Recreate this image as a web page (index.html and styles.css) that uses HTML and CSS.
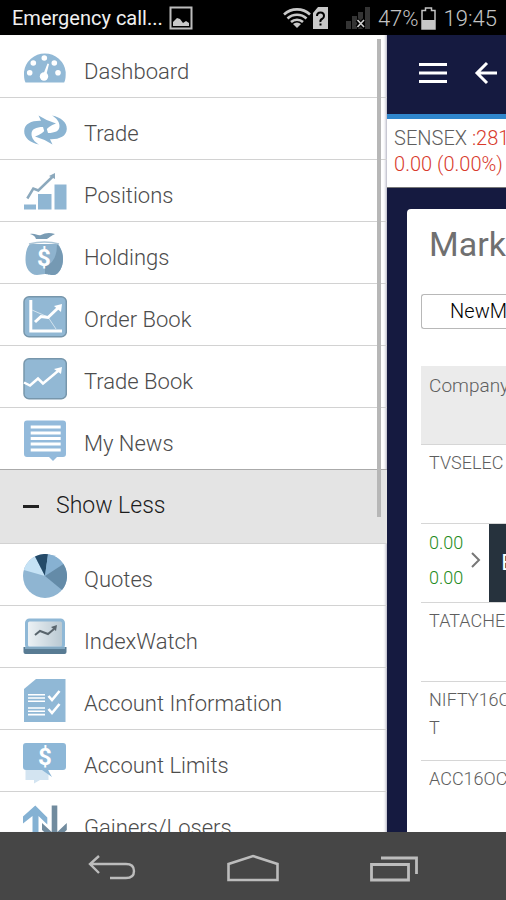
FILE: index.html
```html
<!DOCTYPE html>
<html lang="en">
<head>
<meta charset="utf-8">
<meta name="viewport" content="width=device-width, initial-scale=1">
<title>Market</title>
<link rel="stylesheet" href="styles.css">
</head>
<body>
<header class="status">
  <span class="status-text">Emergency call...</span>
  <svg class="status-picture" width="24" height="24" viewBox="0 0 24 24"><path d="M1.500 1.500h21v21h-21z" fill="none" stroke="#bdbdbd" stroke-width="2"/><path d="M4 20v-4l4-4 3 1 3 4 3-2 3 2v3z" fill="#c8c8c8"/></svg>
  <svg width="28" height="20" viewBox="0 0 28 20"><path d="M10 16a6 6 0 0 1 8 0l-4 4z" fill="#c8c8c8"/><path d="M1 6.500a19 19 0 0 1 26 0M4.500 10.500a14 14 0 0 1 19 0M8 14a9 9 0 0 1 12 0" fill="none" stroke="#c8c8c8" stroke-width="2.600"/></svg>
  <svg class="status-sim" width="15" height="22" viewBox="0 0 15 22"><path d="M5 0h10v22H0V6z" fill="#c8c8c8"/><path d="M4 9q0-3.500 3.500-3.500T11 9q0 2-2 3t-1.500 3" fill="none" stroke="#000" stroke-width="2"/><path d="M6.500 16.500h2v2h-2z"/></svg>
  <svg class="status-signal" width="24" height="22" viewBox="0 0 24 22"><path d="M0 14h5v8H0zM6 9h5v13H6zM12 5h5v17h-5zM19 0h5v22h-5z" fill="#343434"/><path d="m11 13 7 7m0-7-7 7" stroke="#000" stroke-width="4"/><path d="m11.500 13 6.500 7m0-7-6.500 7" stroke="#d0d0d0" stroke-width="1.600"/></svg>
  <span class="status-number">47%</span>
  <svg width="15" height="23" viewBox="0 0 15 23"><path d="M1 3.500h3.500V1h6v2.500H14V22H1z" fill="none" stroke="#c4c4c4" stroke-width="1.500"/><path d="M1 13h13v9H1z" fill="#c8c8c8"/></svg>
  <span class="status-number status-clock">19:45</span>
</header>

<main class="app">
  <nav class="drawer" aria-label="Main menu">
    <a class="item" href="#"><svg class="icon" viewBox="0 0 44 44"><path d="M2.500 36.500C1 34 1 30 1 26a21 21 0 0 1 41.700 0c0 4 0 8-1.500 10.500z" fill="#92b9d6"/><g fill="#fff"><circle cx="6.700" cy="26.700" r="2.800"/><circle cx="10.300" cy="17" r="2.800"/><circle cx="21.300" cy="12" r="2.800"/><circle cx="31.300" cy="17" r="2.800"/><circle cx="35" cy="26.700" r="2.800"/><circle cx="21" cy="30.500" r="4.200"/><path d="m20 29 4.500-11.500 1.500.5L23 30z"/></g></svg><span class="label">Dashboard</span></a>
    <a class="item" href="#"><svg class="icon" viewBox="0 0 44 44"><g id="swap"><path d="M16 36.500C7 34.500 1 30 1.200 23 1.500 15.500 9 12.500 18 12.800L15.500 7.500Q24 13 33 15.500 25 18 21.500 24l-1.500-5C13 19 8.500 21 8.500 26c0 4 3 8 7.500 10.500z" fill="#8bb4d2"/></g><use href="#swap" transform="rotate(180 22.500 22)"/></svg><span class="label">Trade</span></a>
    <a class="item" href="#"><svg class="icon" viewBox="0 0 44 44"><path d="M1 34.500h12v5H1zM15 24h13.500v15.500H15zM31.500 14.500h12v25h-12z" fill="#8fb6d3"/><path d="m4.300 28.500 6-10 5 2L30.300 6" fill="none" stroke="#8ca9bd" stroke-width="2.500"/><path d="m26 6 6-3v6z" fill="#8ca9bd"/></svg><span class="label">Positions</span></a>
    <a class="item" href="#"><svg class="icon" viewBox="0 0 44 44"><path d="M7 2c5-1 8 2 11 1 4-2 8-3 14-1-4 2-5 3-8 5H13c-1-3-3-4-6-5z" fill="#7a9cb4"/><path d="M7 12h28c3 4 5 9 5 15 0 8-4 16-10 16-4 0-5-1-8-1s-5 1-8 1C7 43 2.500 36 2.500 28S4 15 7 12z" fill="#8eb3ce"/><path d="M34 12c4 4 6 9 6 15 0 8-4 16-10 16-4 0-5-1-8-1V34q12-3 12-22z" fill="#7599b3"/><path d="M6 12q16-4 30 0" stroke="#acc5d6" stroke-width="1.500" fill="none"/><text class="dollar" x="21" y="34" text-anchor="middle">$</text></svg><span class="label">Holdings</span></a>
    <a class="item" href="#"><svg class="icon" viewBox="0 0 44 44"><rect x="1" y="2.800" width="42.300" height="40" rx="5" fill="#92b8d4" stroke="#7796ab" stroke-width="1.500"/><path d="M7.800 6v31H39" fill="none" stroke="#fff" stroke-width="3"/><path d="m9 16 16 7 8 12" fill="none" stroke="#d4e4ef" stroke-width="1"/><path d="m12 28 6-5.500 7 1L35 14" fill="none" stroke="#fff" stroke-width="3"/><path d="m31 12 8-2-1 8z" fill="#fff"/></svg><span class="label">Order Book</span></a>
    <a class="item" href="#"><svg class="icon" viewBox="0 0 44 44"><rect x="1" y="2.800" width="42.300" height="40" rx="5" fill="#92b8d4" stroke="#7796ab" stroke-width="1.500"/><path d="m1 26.500 6 3 8-7 5 5L35 15" fill="none" stroke="#fff" stroke-width="2.500"/><path d="m31 13 8-2-1 7z" fill="#fff"/></svg><span class="label">Trade Book</span></a>
    <a class="item" href="#"><svg class="icon" viewBox="0 0 44 44"><path d="M4 2.500h36q3 0 3 3V36q0 3-3 3h-6l-4 4-4-4H4q-3 0-3-3V5.500q0-3 3-3z" fill="#93badb"/><path d="M7.700 9h30M7.700 15h30M7.700 20.500h30M7.700 26h30M7.700 32h30" stroke="#fff" stroke-width="3"/></svg><span class="label">My News</span></a>
    <button class="toggle" type="button"><span class="minus"></span>Show Less</button>
    <a class="item" href="#"><svg class="icon" viewBox="0 0 44 44"><circle cx="22" cy="22" r="22" fill="#8fb5d2"/><path d="M22 22 .8 16A22 22 0 0 1 12 2.400z" fill="#c5e2f5"/><path d="M22 22 12 2.400A22 22 0 0 1 25 .2z" fill="#244a68"/><path d="M22 22 25 .2A22 22 0 0 1 40.500 10z" fill="#87b1d2"/><path d="M22 22 40.500 10a22 22 0 0 1-1.500 26z" fill="#648ba8"/></svg><span class="label">Quotes</span></a>
    <a class="item" href="#"><svg class="icon" viewBox="0 0 44 44"><defs><linearGradient id="screen"><stop offset="0" stop-color="#eef3f6"/><stop offset="1" stop-color="#b7c7d1"/></linearGradient></defs><rect x="3.500" y="4" width="37" height="28" rx="3" fill="url(#screen)" stroke="#8fb8d6" stroke-width="3"/><path d="M.5 31h43v5q0 2-2 2h-39q-2 0-2-2z" fill="#587b93"/><path d="M2 31h40v2H2z" fill="#83a9c2"/><path d="m12 19 5-4 8 3 6-5" fill="none" stroke="#59656d" stroke-width="2"/><path d="m28 11 6-2-1 6z" fill="#59656d"/></svg><span class="label">IndexWatch</span></a>
    <a class="item" href="#"><svg class="icon" viewBox="0 0 44 44"><path d="M13 1h29.500v43H1V11z" fill="#90b8d6"/><path d="M5 16.700h17M5 20h17M5 23.300h17M5 30h17M5 33.300h17M5 36.600h17" stroke="#fff" stroke-width="1.600"/><path d="m25.500 18 3.500 4 7.500-9m-11 18 3.500 4 7.500-9" fill="none" stroke="#fff" stroke-width="2.600"/></svg><span class="label">Account Information</span></a>
    <a class="item" href="#"><svg class="icon" viewBox="0 0 44 44"><path d="M2.500 28h23v12H17l-6 3.500V40H2.500z" fill="#d3e4f1"/><path d="M3 3h37q3 0 3 3v21q0 3-3 3H25l4 7-10-7H3q-3 0-3-3V6q0-3 3-3z" fill="#8db7d7"/><text class="dollar" x="22" y="25" text-anchor="middle">$</text></svg><span class="label">Account Limits</span></a>
    <a class="item" href="#"><svg class="icon" viewBox="0 0 44 44"><path d="m12.300 3.500 12 12v7L15.500 14v30h-6V14L0 21.500v-7z" fill="#84b1d3"/><path d="M28.700 3.500h5.600V30l9.500-9v7L31.500 39.500 19 28v-7l9.700 9z" fill="#718b9e"/></svg><span class="label">Gainers/Losers</span></a>
    <span class="scrollbar"></span>
  </nav>

  <section class="page">
    <header class="topbar">
      <button class="tool" type="button" aria-label="Menu"><svg width="28" height="22" viewBox="0 0 28 22"><path d="M0 2.500h28M0 11h28M0 19.500h28" stroke="#fff" stroke-width="3"/></svg></button>
      <button class="tool" type="button" aria-label="Back"><svg width="24" height="24" viewBox="0 0 24 24"><path d="M23 12H3M13 2 3 12l10 10" fill="none" stroke="#fff" stroke-width="3"/></svg></button>
    </header>
    <div class="ticker">
      <p>SENSEX <span class="down">:281</span></p>
      <p class="down">0.00 (0.00%)</p>
    </div>
    <div class="card">
      <h1>Mark</h1>
      <button class="picker" type="button">NewM</button>
      <table>
        <thead><tr><th scope="col">Company</th></tr></thead>
        <tbody>
          <tr><td>TVSELEC</td></tr>
          <tr><td class="swiped"><div class="swipe"><span class="prices"><span>0.00</span><span>0.00</span></span><svg class="chevron" width="10" height="16" viewBox="0 0 10 16"><path d="m1 1 7 7-7 7" fill="none" stroke="#777" stroke-width="2"/></svg><button class="buy" type="button">B</button></div></td></tr>
          <tr><td>TATACHE</td></tr>
          <tr><td>NIFTY16O<br>T</td></tr>
          <tr><td>ACC16OC</td></tr>
        </tbody>
      </table>
    </div>
  </section>
</main>

<footer class="softkeys">
  <button type="button" aria-label="Back"><svg width="48" height="28" viewBox="0 0 48 28"><path d="M2 10h36q8 0 8 7t-8 7H22M11 2 2 10l9 9" fill="none" stroke="#bcbcbc" stroke-width="2.400"/></svg></button>
  <button type="button" aria-label="Home"><svg width="52" height="28" viewBox="0 0 52 28"><path d="M1.500 10 26 2l24.500 8v16h-49z" fill="none" stroke="#bcbcbc" stroke-width="2.600"/></svg></button>
  <button type="button" aria-label="Recent apps"><svg width="48" height="28" viewBox="0 0 48 28"><path d="M1.500 10.500h37V26h-37zM11 4h35.500v16" fill="none" stroke="#bcbcbc" stroke-width="2.800"/></svg></button>
</footer>
</body>
</html>
```
FILE: styles.css
```css
* { box-sizing: border-box; }

body {
  display: flex;
  flex-direction: column;
  height: 100vh;
  margin: 0;
  overflow: hidden;
  background: #000;
  color: #5e5e5e;
  font-family: Roboto, "Liberation Sans", sans-serif;
  font-size: 18px;
}

button { font: inherit; border: 0; padding: 0; cursor: pointer; }
svg { display: block; flex: none; }
h1, p { margin: 0; font-weight: 300; }

/* Device status bar */
.status {
  display: flex;
  flex: none;
  align-items: center;
  gap: 2px;
  height: 35px;
  padding: 1px 9px 0 12px;
  background: #000;
  color: #c4c4c4;
}
.status-text { color: #f0f0f0; font-size: 20px; }
.status-picture { margin: 0 auto 0 4px; }
.status-signal { margin: 0 6px 0 16px; }
.status-number { font-size: 22px; font-weight: 300; }
.status-clock { margin-left: 6px; }

.app { display: flex; flex: 1; min-height: 0; background: #151a40; }

/* Menu drawer */
.drawer {
  position: relative;
  flex: none;
  width: 76.5%;
  padding-top: 1px;
  overflow: hidden;
  background: #fff;
  box-shadow: inset -3px 0 3px -2px #aab;
}
.item {
  display: flex;
  align-items: center;
  gap: 17px;
  padding: 10px 23px 7px;
  border-bottom: 1px solid #d2d2d2;
  color: #4c4c4c;
  font-size: 22px;
  text-decoration: none;
}
.icon { width: 44px; height: 44px; }
.dollar { fill: #fff; font-size: 24px; font-weight: 700; }
.label { padding-top: 8px; font-weight: 300; line-height: 24px; }
.toggle {
  display: flex;
  align-items: center;
  gap: 17px;
  width: 100%;
  margin-top: -1px;
  padding: 24px 23px 25px;
  border-top: 1px solid #aaa;
  border-bottom: 1px solid #d2d2d2;
  background: #e4e4e4;
  color: #1c1c1c;
  font-size: 23px;
  font-weight: 300;
  line-height: 24px;
}
.minus { width: 16px; height: 3px; background: #222; }
.scrollbar {
  position: absolute;
  top: 4px;
  right: 6px;
  width: 4px;
  height: 60%;
  background: #b7b7b7;
}

/* Page pushed aside by the drawer */
.page { flex: 1; min-width: 0; overflow: hidden; white-space: nowrap; }
.topbar {
  display: flex;
  align-items: center;
  gap: 27px;
  height: 84px;
  padding: 0 0 3px 32px;
  border-bottom: 5px solid #2f86cc;
}
.tool { flex: none; background: none; }
.ticker {
  padding: 6px 7px 10px;
  border-bottom: 1px solid #777;
  background: #fff;
  font-size: 20px;
  line-height: 26px;
}
.down { color: #d83a2c; }
.card {
  margin: 21px 0 0 20px;
  padding: 14px 0 240px 14px;
  border-radius: 4px 0 0 0;
  background: #fff;
}
h1 { padding-left: 8px; font-size: 34px; font-weight: 400; line-height: 42px; color: #707070; }
.picker {
  width: 100%;
  margin: 29px 0 37px;
  padding: 4px 0 4px 28px;
  border: 1px solid #b8b8b8;
  border-right: 0;
  border-radius: 3px 0 0 3px;
  background: #fff;
  color: #000;
  font-size: 20px;
  font-weight: 300;
  line-height: 25px;
  text-align: left;
}
table { width: 100%; border-collapse: collapse; table-layout: fixed; }
th, td {
  padding: 4px 0 4px 8px;
  overflow: hidden;
  font-weight: 300;
  line-height: 28px;
  text-align: left;
  vertical-align: top;
}
th { height: 78px; padding-top: 6px; background: #ebebeb; font-size: 19px; }
td { height: 79px; border-top: 1px solid #d6d6d6; }
.swiped { padding: 0 0 0 8px; }
.swipe { display: flex; align-items: center; gap: 8px; height: 78px; }
.prices { display: flex; flex-direction: column; gap: 7px; padding-bottom: 4px; color: #1f8c22; }
.chevron { margin-top: -6px; }
.buy {
  flex: 1;
  align-self: stretch;
  padding-left: 12px;
  background: #26323d;
  color: #fff;
  font-size: 22px;
  font-weight: 400;
  text-align: left;
}

/* Device soft keys */
.softkeys {
  display: flex;
  flex: none;
  align-items: center;
  justify-content: space-between;
  height: 68px;
  padding: 4px 88px 0;
  background: #464646;
}
.softkeys button { background: none; }
```
